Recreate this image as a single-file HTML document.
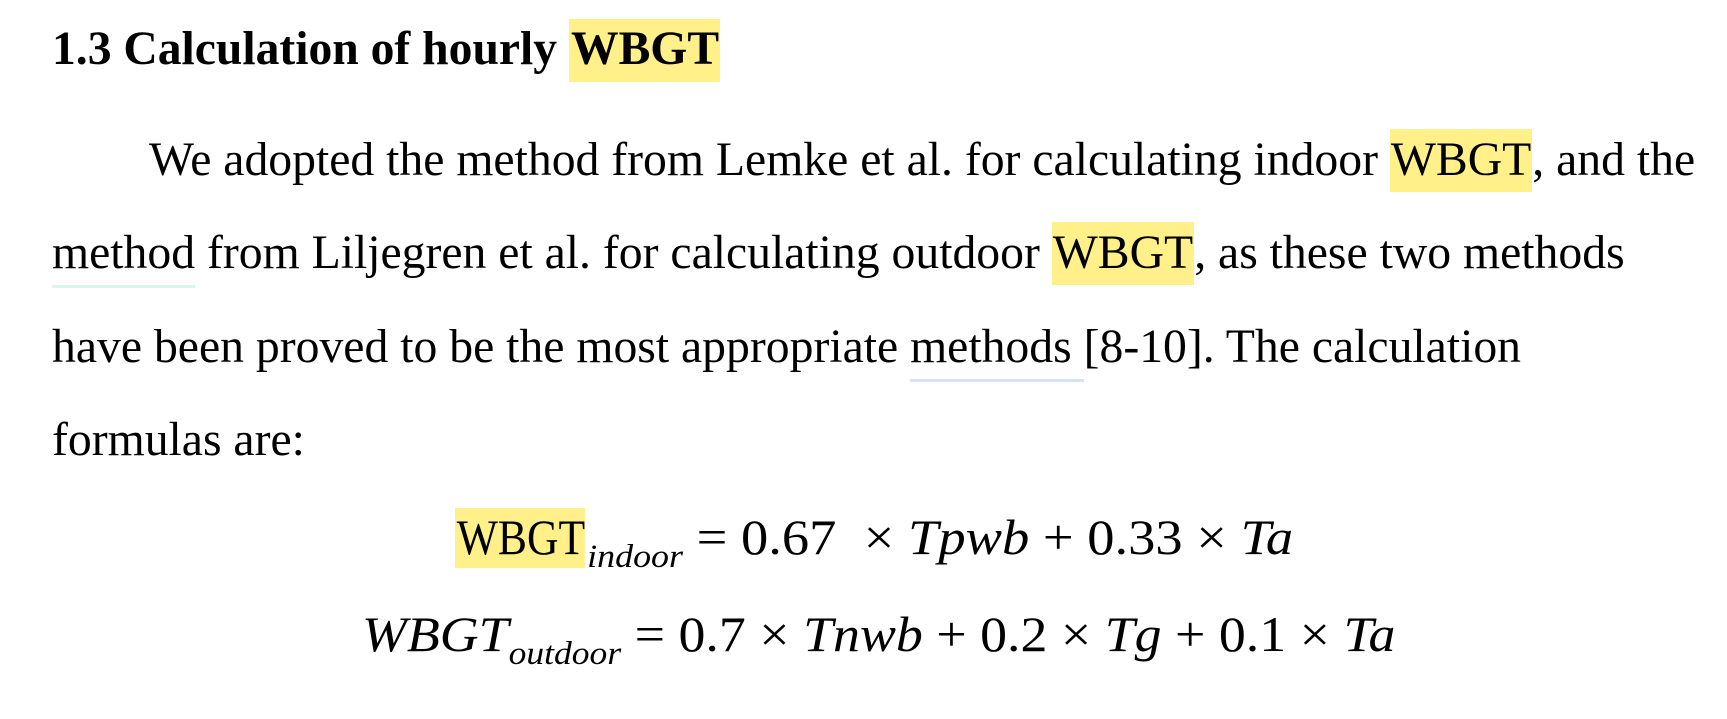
<!DOCTYPE html>
<html><head><meta charset="utf-8"><style>
body{margin:0;width:1727px;height:719px;background:#fff;position:relative;overflow:hidden;font-family:"Liberation Serif",serif;color:#000}
.l{position:absolute;white-space:nowrap;font-size:47.7px;line-height:1}
.hl{background:#fff08a}
.h{font-weight:bold;font-size:47.6px}
sub{font-size:33px;vertical-align:-13px;line-height:0;font-style:italic}
.eq{font-size:50px;transform-origin:0 50%}
.n{display:inline-block;transform:scaleX(0.8);transform-origin:0 50%;margin-right:-28px}
</style></head><body>
<div class="l h" style="left:52px;top:26px;"><span>1.3 Calculation of hourly </span><span class="hl" style="padding:4px 1px 7px 2px">WBGT</span></div>
<div class="l" style="left:149px;top:136px;">We adopted the method from Lemke et al. for calculating indoor <span class="hl" style="padding:4px 1px 6px 1px">WBGT</span>, and the</div>
<div class="l" style="left:52px;top:229px;"><span style="border-bottom:3px solid #d8f5ee;padding-bottom:6px">method</span> from Liljegren et al. for calculating outdoor <span class="hl" style="padding:4px 1px 6px 1px">WBGT</span>, as these two methods</div>
<div class="l" style="left:52px;top:323px;">have been proved to be the most appropriate <span style="border-bottom:3px solid #d6e2f8;padding-bottom:6px">methods </span>[8-10]. The calculation</div>
<div class="l" style="left:52px;top:416px;">formulas are:</div>
<div class="l eq" style="left:455px;top:508px;transform:scaleX(1.09)"><span class="n hl" style="padding:4px 0 6px 2px">WBGT</span><sub>indoor</sub> = 0.67 &nbsp;× <i>Tpwb</i> + 0.33 × <i>Ta</i></div>
<div class="l eq" style="left:362px;top:609px;transform:scaleX(1.077)"><i>WBGT</i><sub>outdoor</sub> = 0.7 × <i>Tnwb</i> + 0.2 × <i>Tg</i> + 0.1 × <i>Ta</i></div>
</body></html>
